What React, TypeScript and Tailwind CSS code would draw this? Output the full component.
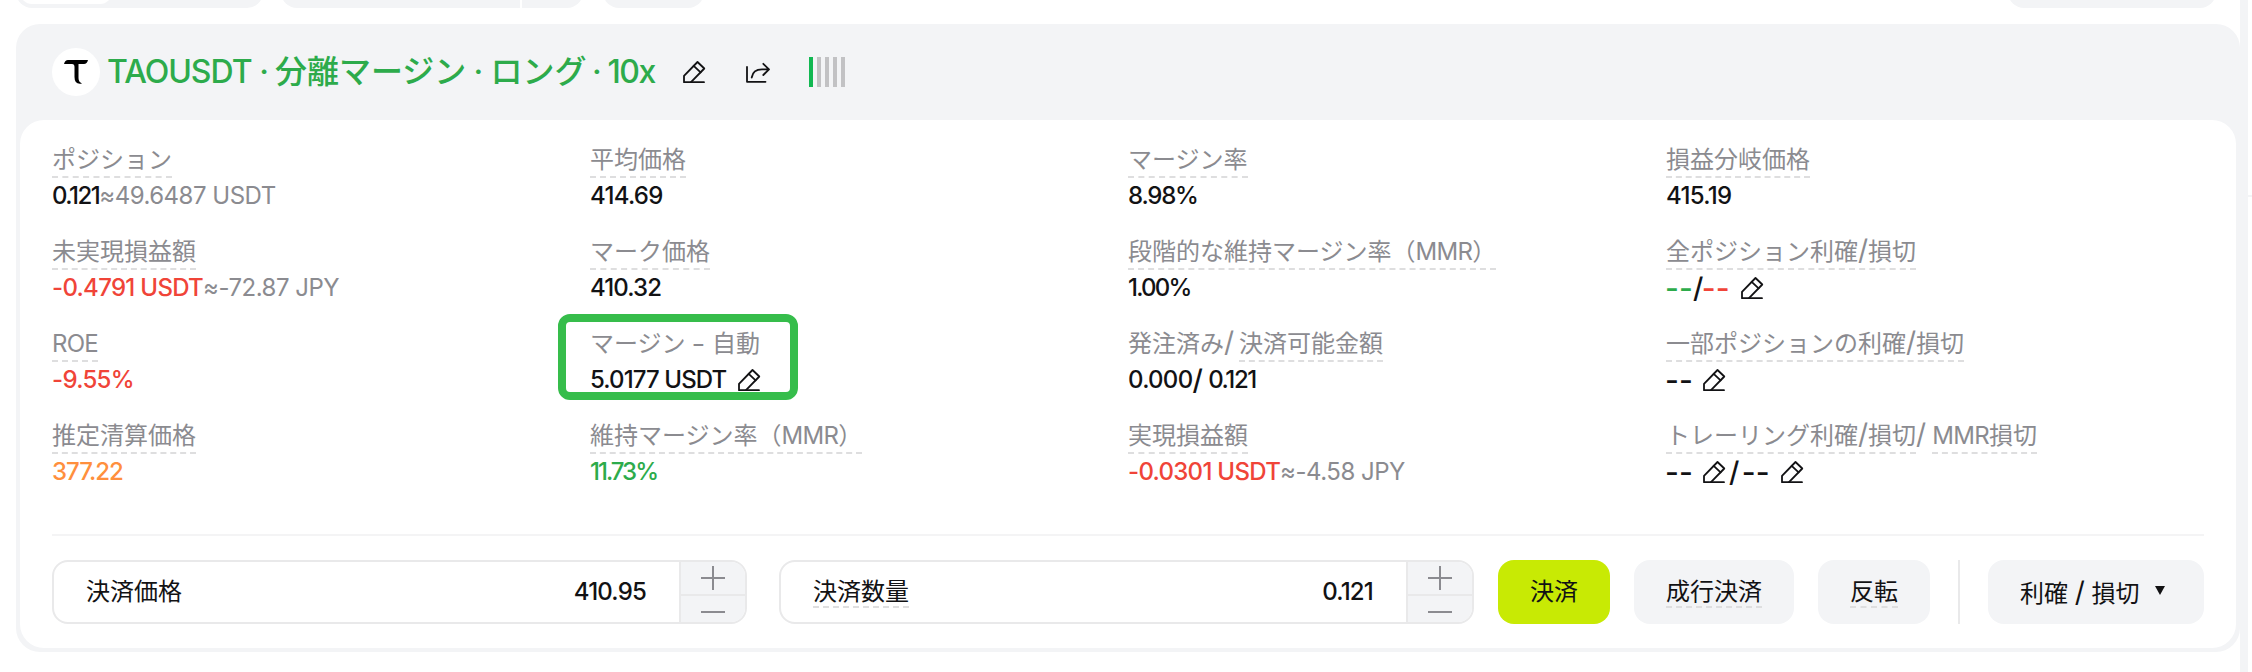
import { type ReactNode } from 'react';

// ─── Icons ────────────────────────────────────────────────────────────────────

function PencilIcon({ className = '' }: { className?: string }) {
  return (
    <svg viewBox="0 0 24 24" className={`w-6 h-6 flex-none ${className}`} fill="none"
      stroke="#121214" strokeWidth="1.8" strokeLinejoin="round" strokeLinecap="round">
      <path d="M2 22.2V15.8L15.5 2L22.3 8.5L9 22.2Z" />
      <path d="M9 22.2H22M11.7 5.8L18.6 12.3" />
    </svg>
  );
}

function ShareIcon() {
  return (
    <svg viewBox="0 0 24 24" className="w-6 h-6 flex-none overflow-visible" fill="none"
      stroke="#121214" strokeWidth="1.8" strokeLinejoin="round" strokeLinecap="round">
      <path d="M2 7V21.8H20.5" />
      <path d="M6.7 17.5C7.5 12.3 11 9.4 17 9.4H23.7M18.3 3.8L24 9.4L18.3 15" />
    </svg>
  );
}

// ─── Position fields ──────────────────────────────────────────────────────────

function Slash({ className = '' }: { className?: string }) {
  return <span className={`text-[28px] leading-none ${className}`}>/</span>;
}

function Dash({ className = '' }: { className?: string }) {
  return (
    <span className={`w-[27px] text-[30px] leading-none tracking-[0.2px] -ml-px mr-px ${className}`}>--</span>
  );
}

function Label({ children, plain }: { children: ReactNode; plain?: boolean }) {
  return (
    <span className={`h-9 leading-9 text-[#8b8b90] border-b-2 border-dashed
      ${plain ? 'border-transparent' : 'border-[#dededf]'}`}>
      {children}
    </span>
  );
}

function Field({ label, children }: { label: ReactNode; children: ReactNode }) {
  return (
    <div className="h-[92px] flex flex-col items-start">
      <div className="flex items-start whitespace-pre">{label}</div>
      <div className="h-9 flex items-center whitespace-pre font-medium tracking-[-0.7px] text-[#121214]">
        {children}
      </div>
    </div>
  );
}

const L = (text: ReactNode) => <Label>{text}</Label>;
const MMR = <span className="tracking-[-0.7px]">MMR</span>;

function Approx({ children }: { children: string }) {
  return <span className="font-normal tracking-[-0.5px] text-[#8b8b90]">≈{children}</span>;
}

const COLUMNS: { label: ReactNode; value: ReactNode }[][] = [
  [
    { label: L('ポジション'), value: <><span className="tracking-[-1.5px]">0.121</span><Approx>49.6487 USDT</Approx></> },
    { label: L('未実現損益額'), value: <><span className="text-[#f04438]">-0.4791 USDT</span><Approx>-72.87 JPY</Approx></> },
    { label: L(<span className="tracking-[-0.8px]">ROE</span>), value: <span className="text-[#f04438]">-9.55%</span> },
    { label: L('推定清算価格'), value: <span className="tracking-[-1px] text-[#ff8f3d]">377.22</span> },
  ],
  [
    { label: L('平均価格'), value: '414.69' },
    { label: L('マーク価格'), value: <span className="tracking-[-0.9px]">410.32</span> },
    {
      label: <Label plain>マージン <span className="inline-block scale-x-125 mx-px">-</span> 自動</Label>,
      value: <><span className="tracking-[-0.9px]">5.0177 USDT</span><PencilIcon className="ml-[11px]" /></>,
    },
    { label: L(<>維持マージン率（{MMR}）</>), value: <span className="tracking-[-2px] text-[#2dab4b]">11.73%</span> },
  ],
  [
    { label: L('マージン率'), value: <span className="tracking-[-1.2px]">8.98%</span> },
    { label: L(<>段階的な維持マージン率（{MMR}）</>), value: <span className="tracking-[-1.8px]">1.00%</span> },
    {
      label: <><Label plain>発注済み<Slash className="mr-[5px]" /></Label>{L('決済可能金額')}</>,
      value: <>0.000<Slash className="mr-[6px]" /><span className="tracking-[-1.4px]">0.121</span></>,
    },
    { label: L('実現損益額'), value: <><span className="text-[#f04438]">-0.0301 USDT</span><Approx>-4.58 JPY</Approx></> },
  ],
  [
    { label: L('損益分岐価格'), value: '415.19' },
    {
      label: L(<>全ポジション利確<Slash />損切</>),
      value: <><Dash className="text-[#2dab4b]" /><Slash /><Dash className="text-[#f04438]" /><PencilIcon className="ml-[10px]" /></>,
    },
    { label: L(<>一部ポジションの利確<Slash />損切</>), value: <><Dash /><PencilIcon className="ml-[9px]" /></> },
    {
      label: <>{L(<>トレーリング利確<Slash />損切</>)}<Label plain><Slash className="mr-[6px]" /></Label>{L(<>{MMR}損切</>)}</>,
      value: <><Dash /><PencilIcon className="ml-[9px]" /><Slash className="ml-[3px] mr-1" /><Dash /><PencilIcon className="ml-[10px]" /></>,
    },
  ],
];

// ─── Order form ───────────────────────────────────────────────────────────────

function Stepper({ label, value }: { label: ReactNode; value: string }) {
  return (
    <div className="w-[695px] h-16 flex rounded-2xl border-2 border-[#e9e9ea] overflow-hidden">
      <div className="flex-1 flex items-center justify-between pl-8 pr-[33px]">
        {label}
        <span className="font-medium tracking-[-0.8px]">{value}</span>
      </div>
      <div className="w-[66px] bg-[#f3f4f6] border-l-2 border-[#e9e9ea] flex flex-col items-center">
        <div className="h-[34px] w-full border-b-2 border-[#e9e9ea] flex justify-center">
          <svg viewBox="0 0 24 32" className="w-6 h-8" stroke="#8b8b90" strokeWidth="2">
            <path d="M0 16H24M12 4V28" />
          </svg>
        </div>
        <div className="mt-[15px] w-6 h-0.5 bg-[#8b8b90]" />
      </div>
    </div>
  );
}

const BTN = 'h-16 px-8 rounded-2xl flex items-center';
const HINT = 'h-8 leading-8 border-b-2 border-dashed border-[#dededf]';

export default function App() {
  return (
    <div className="relative w-[2252px] h-[672px] overflow-hidden bg-white text-2xl text-[#121214] flex
      font-['Inter','Noto_Sans_CJK_JP',sans-serif]">
      <div className="w-[2240px] flex-none pl-4">

        {/* Toolbar, cut off by the top edge */}
        <div className="h-2 flex items-end">
          <div className="relative w-[247px] h-10 rounded-2xl bg-[#f3f4f6]">
            <div className="absolute left-1 bottom-1 w-[92px] h-9 rounded-xl bg-white" />
          </div>
          <div className="ml-[18px] w-[302px] h-10 rounded-2xl bg-[#f3f4f6] pl-[239px]">
            <div className="w-0.5 h-full bg-white" />
          </div>
          <div className="ml-5 w-[101px] h-10 rounded-2xl bg-[#f3f4f6]" />
          <div className="ml-auto mr-6 w-[208px] h-10 rounded-2xl bg-[#f3f4f6]" />
        </div>

        {/* Position card */}
        <div className="mt-4 h-[628px] rounded-3xl bg-[#f3f4f6] px-1 pb-1 flex flex-col">
          <header className="h-24 flex-none flex items-center pl-8">
            <div className="w-12 h-12 rounded-full bg-white flex items-center justify-center">
              <svg viewBox="0 0 24 26" className="w-6 h-[26px]">
                <path d="M4 1H24Q23 5 20 5H14.5V19Q14.5 23 18 24.5Q10.5 26 10.5 18V8Q10.5 5 8 5H0Q1 1 4 1Z" fill="#000" />
              </svg>
            </div>
            <h1 className="ml-[7px] flex text-[32px] leading-none font-medium text-[#2dab4b] whitespace-nowrap">
              <span className="w-[146px] tracking-[-1px]">TAOUSDT</span>
              <span className="w-[22px] text-center">·</span>
              <span>分離マージン</span>
              <span className="w-6 text-center">·</span>
              <span>ロング</span>
              <span className="w-[21px] text-center">·</span>
              <span className="w-[47px] tracking-[-1.4px]">10x</span>
            </h1>
            <div className="ml-7"><PencilIcon /></div>
            <div className="ml-[39px]"><ShareIcon /></div>
            <div className="ml-10 flex gap-1">
              {['bg-[#12b852]', 'bg-[#c2c2c4]', 'bg-[#c2c2c4]', 'bg-[#c2c2c4]', 'bg-[#c2c2c4]'].map((c, i) => (
                <span key={i} className={`w-1 h-[30px] ${c}`} />
              ))}
            </div>
          </header>

          <div className="relative flex-1 bg-white rounded-3xl px-8 pt-[22px]">
            <div className="grid grid-cols-[538px_538px_538px_1fr]">
              {COLUMNS.map((col, i) => (
                <div key={i}>
                  {col.map((f, j) => <Field key={j} label={f.label}>{f.value}</Field>)}
                </div>
              ))}
            </div>
            <div className="mt-6 h-0.5 bg-[#f4f4f5]" />

            <div className="mt-6 flex items-center">
              <Stepper label="決済価格" value="410.95" />
              <div className="ml-8" />
              <Stepper label={<span className={HINT}>決済数量</span>} value="0.121" />
              <button className={`${BTN} ml-6 bg-[#c8ea04]`}>決済</button>
              <button className={`${BTN} ml-6 bg-[#f3f4f6]`}><span className={HINT}>成行決済</span></button>
              <button className={`${BTN} ml-6 bg-[#f3f4f6]`}><span className={HINT}>反転</span></button>
              <div className="ml-7 w-0.5 h-16 bg-[#e9e9ea]" />
              <button className={`${BTN} ml-auto w-[216px] pt-1 bg-[#f3f4f6] whitespace-pre`}>
                <span>利確 <Slash /> 損切</span>
                <svg viewBox="0 0 10 9" className="ml-[15px] -mt-2 w-2.5 h-[9px]"><path d="M0 0H10L5 9Z" fill="#121214" /></svg>
              </button>
            </div>

            {/* Highlight round the margin field */}
            <div className="absolute left-[538px] top-[194px] w-[240px] h-[86px] rounded-xl border-8 border-[#36bd4b]" />
          </div>
        </div>
      </div>

      {/* Gutter before the next panel */}
      <div className="w-2 flex-none bg-[#f3f4f6]" />
      <div className="flex-1 pt-[195px]"><div className="h-0.5 bg-[#f3f4f6]" /></div>
    </div>
  );
}
